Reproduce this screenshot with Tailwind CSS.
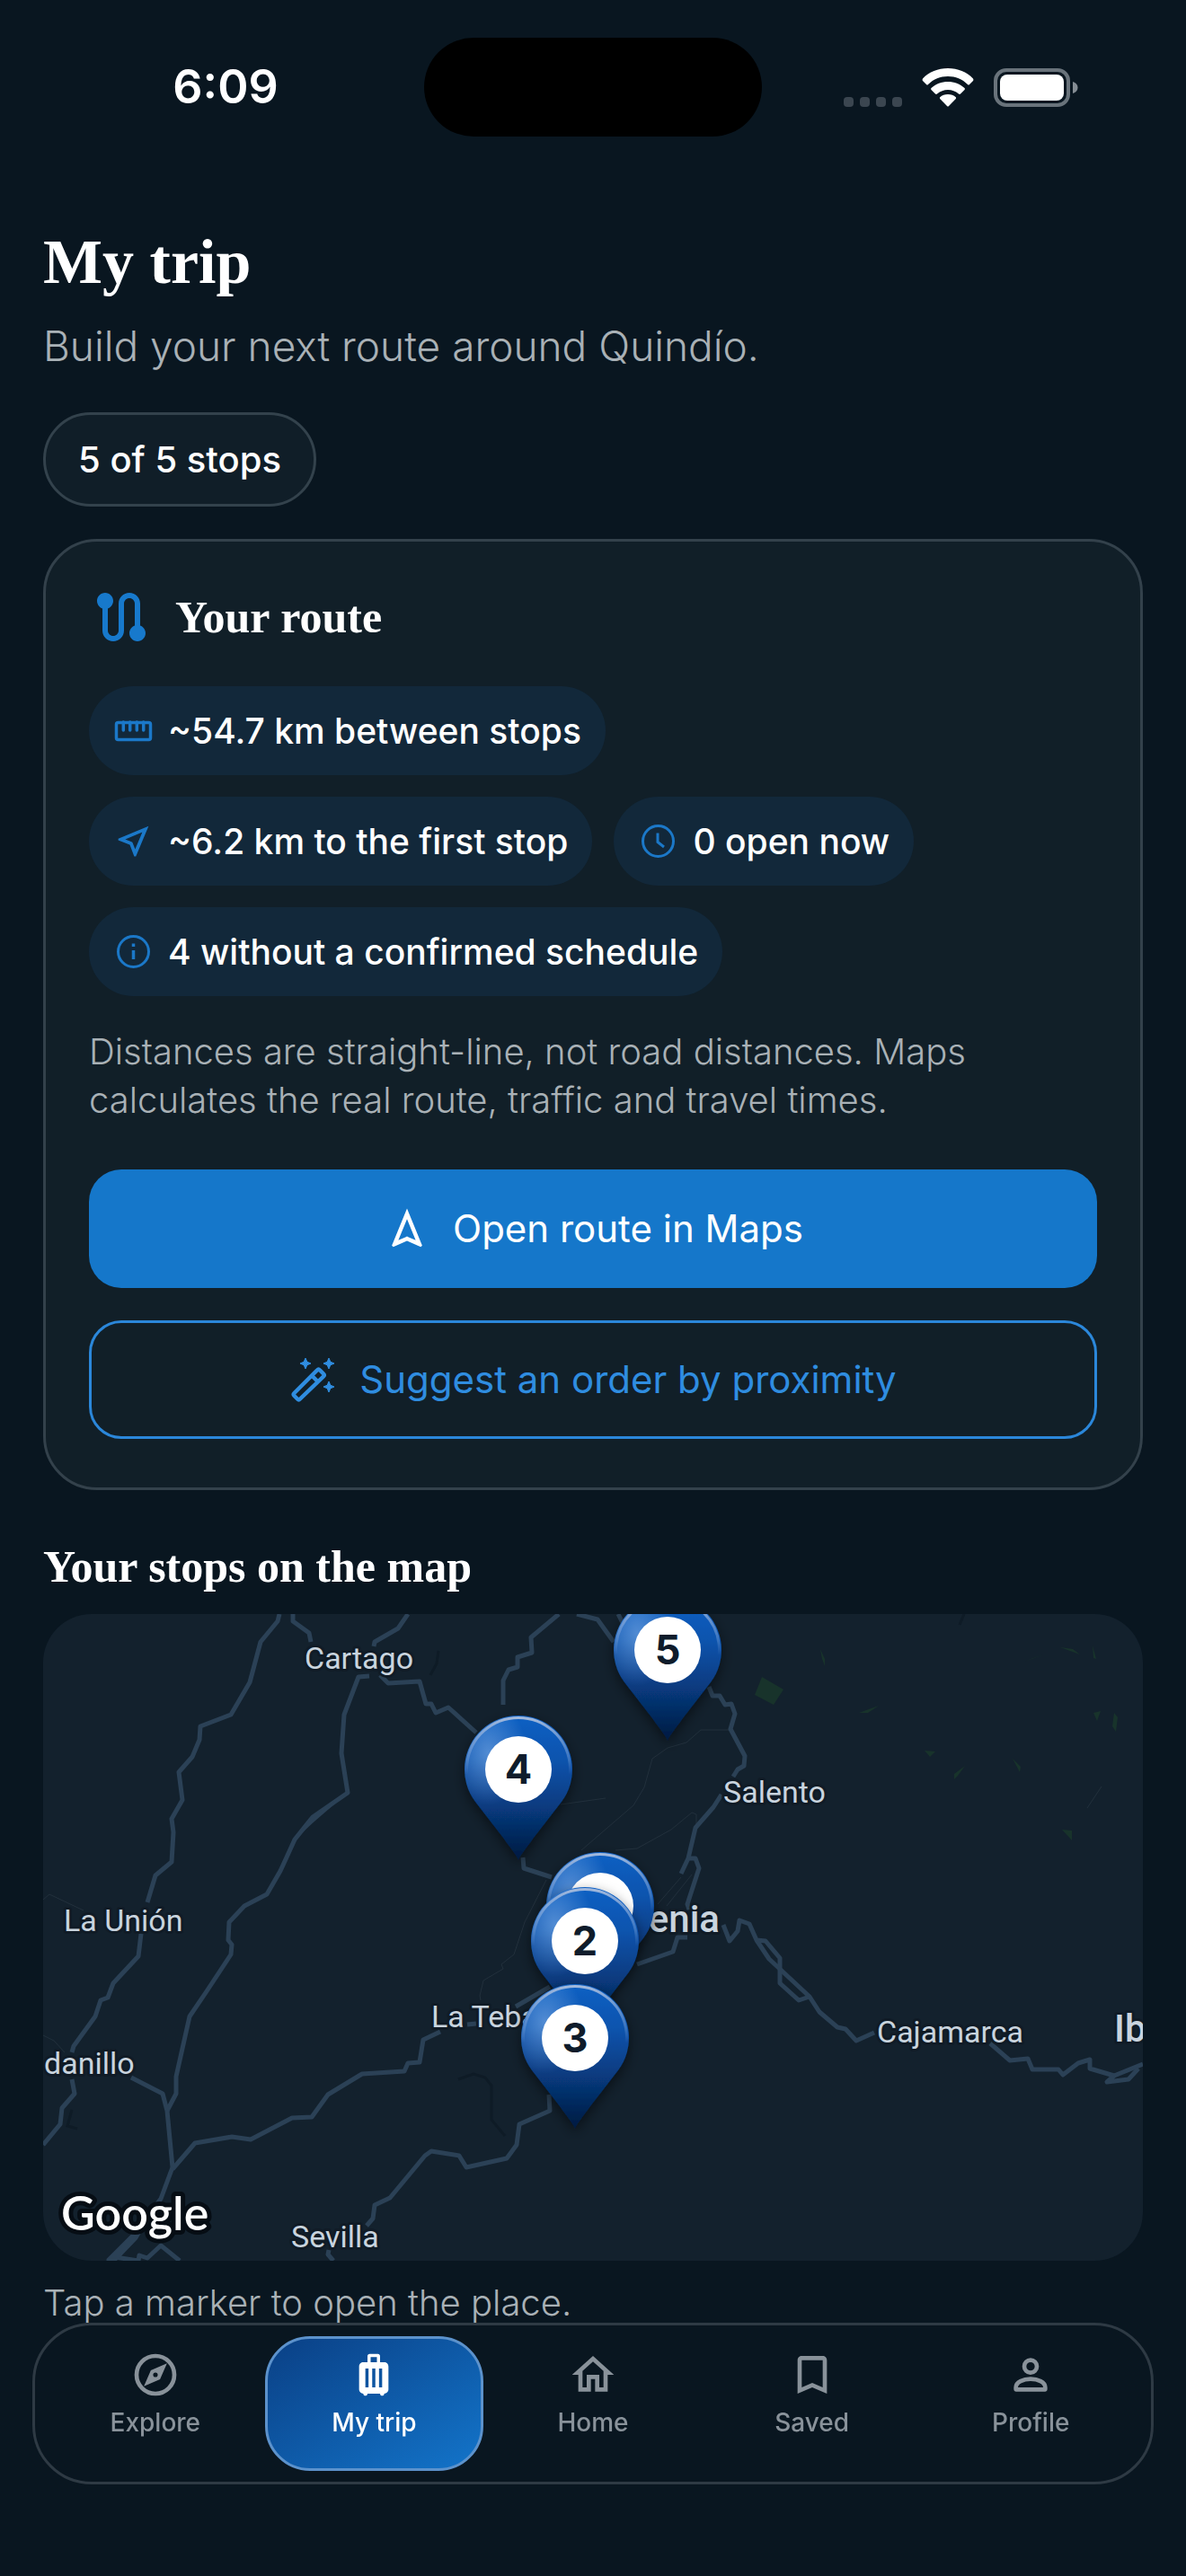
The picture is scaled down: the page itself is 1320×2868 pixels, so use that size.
<!DOCTYPE html>
<html lang="en">
<head>
    <meta charset="utf-8" />
    <meta name="viewport" content="width=device-width, initial-scale=1" />
    <title>My trip</title>
    <script src="https://cdn.jsdelivr.net/npm/@tailwindcss/browser@4"></script>
</head>
<body class="min-h-screen bg-[#091620] font-['Inter',sans-serif] text-white">
    <!-- Status bar -->
    <header class="grid grid-cols-[1fr_376px_1fr] items-center px-[30px] pt-[42px]">
        <time class="text-center text-[52px] leading-[60px] font-semibold">6:09</time>
        <div class="h-[110px] rounded-full bg-black"></div>
        <div class="flex items-end justify-center gap-[22px]">
            <div class="flex gap-[7px]">
                <span class="size-[11px] rounded-sm bg-[#3b4650]"></span>
                <span class="size-[11px] rounded-sm bg-[#3b4650]"></span>
                <span class="size-[11px] rounded-sm bg-[#3b4650]"></span>
                <span class="size-[11px] rounded-sm bg-[#3b4650]"></span>
            </div>
            <svg width="58" height="43" viewBox="0 0 58 43" fill="#fff" aria-hidden="true">
                <path d="M29 0C18 0 8 4 1 11.500Q0 13 1 14L5 18Q6 19 7 18C13 12 20.500 9 29 9S45 12 51 18Q52 19 53 18L57 14Q58 13 57 11.500C50 4 40 0 29 0Z" />
                <path d="M29 15C22 15 15.500 17.500 10.500 22Q9.500 23 10.500 24L15 28.500Q16 29.300 17 28.500C20.500 25.500 24.500 24 29 24S37.500 25.500 41 28.500Q42 29.300 43 28.500L47.500 24Q48.500 23 47.500 22C42.500 17.500 36 15 29 15Z" />
                <path d="M29 29C25.500 29 22.500 30.200 20.200 32.200Q19.500 33 20.200 34L28 42Q29 43 30 42L37.800 34Q38.500 33 37.800 32.200C35.500 30.200 32.500 29 29 29Z" />
            </svg>
            <svg width="94" height="43" viewBox="0 0 94 43" aria-hidden="true">
                <rect x="2" y="2" width="81" height="39" rx="12" fill="none" stroke="#69737b" stroke-width="4" />
                <rect x="7" y="7" width="71" height="29" rx="8" fill="#fff" />
                <path d="M88 15C91.500 16 93.500 18.500 93.500 21.500S91.500 27 88 28Z" fill="#858d94" />
            </svg>
        </div>
    </header>

    <main class="px-12 pt-[98px] pb-[260px]">
        <h1 class="font-['Liberation_Serif',serif] text-[70px] leading-[84px] font-bold">My trip</h1>
        <p class="mt-[21px] text-[46px] leading-[60px] font-light text-[#a9b1b6]">Build your next route around Quindío.</p>
        <div class="mt-[44px] inline-flex h-[105px] items-center rounded-full border-3 border-[#33424c] bg-[#101e28] px-9 text-[40px] leading-[54px] font-medium">
            5 of 5 stops
        </div>

        <!-- Route summary -->
        <section class="mt-9 rounded-[60px] border-3 border-[#33414b] bg-[#111f28] px-12 pt-12 pb-[54px]">
            <div class="flex items-center gap-6">
                <svg class="size-[72px]" viewBox="0 0 24 24" fill="#1779cc" aria-hidden="true">
                    <path d="M19 15.180V7c0-2.210-1.790-4-4-4s-4 1.790-4 4v10c0 1.100-.9 2-2 2s-2-.9-2-2V8.820C8.160 8.400 9 7.300 9 6c0-1.660-1.340-3-3-3S3 4.340 3 6c0 1.300.84 2.400 2 2.820V17c0 2.210 1.790 4 4 4s4-1.790 4-4V7c0-1.100.9-2 2-2s2 .9 2 2v8.180c-1.160.41-2 1.510-2 2.820 0 1.660 1.340 3 3 3s3-1.340 3-3c0-1.310-.84-2.410-2-2.820z" />
                </svg>
                <h2 class="font-['Liberation_Serif',serif] text-[50px] leading-[60px] font-bold">Your route</h2>
            </div>

            <ul class="mt-[41px] flex flex-wrap gap-6 text-[39px] leading-[54px] font-medium">
                <li class="flex h-[99px] items-center gap-4 rounded-full bg-[#12283a] px-[27px]">
                    <svg class="size-[45px]" viewBox="0 0 45 45" fill="none" stroke="#1b78c8" stroke-width="3.500" aria-hidden="true">
                        <rect x="3.500" y="13.500" width="38" height="19" rx="2" />
                        <path d="M11.300 13V22M18.700 13V22M26.300 13V22M33.700 13V22" stroke-linecap="round" />
                    </svg>
                    ~54.7 km between stops
                </li>
                <li class="flex h-[99px] items-center gap-4 rounded-full bg-[#12283a] px-[27px]">
                    <svg class="size-[45px]" viewBox="0 0 24 24" fill="#1b78c8" aria-hidden="true">
                        <path d="M17.270 6.730l-4.240 10.130-1.320-3.420-.32-.83-.82-.32-3.430-1.330 10.130-4.230M21 3L3 10.530v.98l6.840 2.650L12.480 21h.98L21 3z" />
                    </svg>
                    ~6.2 km to the first stop
                </li>
                <li class="flex h-[99px] items-center gap-4 rounded-full bg-[#12283a] px-[27px]">
                    <svg class="size-[45px]" viewBox="0 0 45 45" fill="none" stroke="#1b78c8" stroke-width="3" aria-hidden="true">
                        <circle cx="22.500" cy="22.500" r="17" />
                        <path d="M22 13.500V23.500L29 29" />
                    </svg>
                    0 open now
                </li>
                <li class="flex h-[99px] items-center gap-4 rounded-full bg-[#12283a] px-[27px]">
                    <svg class="size-[45px]" viewBox="0 0 45 45" fill="none" stroke="#1b78c8" stroke-width="3" aria-hidden="true">
                        <circle cx="22.500" cy="22.500" r="17" />
                        <path d="M22.500 21V31M22.500 13.500V17" stroke-width="3.500" />
                    </svg>
                    4 without a confirmed schedule
                </li>
            </ul>

            <p class="mt-[35px] text-[40px] leading-[54px] font-light text-[#a9b1b6]">
                Distances are straight-line, not road distances. Maps calculates the real route, traffic and travel times.
            </p>

            <div class="mt-[50px] flex flex-col gap-9 text-[42px] leading-[54px]">
                <button type="button" class="flex h-[132px] items-center justify-center gap-6 rounded-[36px] bg-[#1577ca]">
                    <svg class="size-[54px]" viewBox="0 0 24 24" fill="#fff" aria-hidden="true">
                        <path d="M12 7.270l4.280 10.430-3.470-1.530-.81-.36-.81.36-3.470 1.530L12 7.270M12 2L4.500 20.290l.71.71L12 18l6.790 3 .71-.71L12 2z" />
                    </svg>
                    Open route in Maps
                </button>
                <button type="button" class="flex h-[132px] items-center justify-center gap-6 rounded-[36px] border-3 border-[#2b87da] text-[#2f8de0]">
                    <svg class="size-[54px]" viewBox="0 0 54 54" aria-hidden="true">
                        <path d="M31 16.500Q32.500 15 34 16.500L38 20.500Q39.500 22 38 23.500L12 48.500Q10.500 50 9 48.500L5.500 45Q4 43.500 5.500 42ZM25 22.500L32 29.500" fill="none" stroke="#2f8de0" stroke-width="4.500" stroke-linejoin="round" />
                        <path d="M18 3L19.800 7.200L24 9L19.800 10.800L18 15L16.200 10.800L12 9L16.200 7.200ZM44 3L45.800 7.200L50 9L45.800 10.800L44 15L42.200 10.800L38 9L42.200 7.200ZM44 29L45.800 33.200L50 35L45.800 36.800L44 41L42.200 36.800L38 35L42.200 33.200Z" fill="#2f8de0" stroke="#2f8de0" stroke-width="1" />
                    </svg>
                    Suggest an order by proximity
                </button>
            </div>
        </section>

        <h2 class="mt-[55px] font-['Liberation_Serif',serif] text-[50px] leading-[60px] font-bold">Your stops on the map</h2>

        <div class="mt-[23px] overflow-hidden rounded-[54px] bg-[#13212d]">
            <svg class="block h-auto w-full" viewBox="0 0 1224 720" role="group" aria-label="Map of your stops">
                <defs>
                    <linearGradient id="pin-fill" x1="0" y1="0" x2="0" y2="1">
                        <stop offset="0" stop-color="#1160c4" />
                        <stop offset=".3" stop-color="#0c54ae" />
                        <stop offset=".65" stop-color="#07397c" />
                        <stop offset="1" stop-color="#021a40" />
                    </linearGradient>
                    <radialGradient id="pin-shine" cx=".22" cy=".26" r=".36">
                        <stop offset="0" stop-color="#7fb0ea" stop-opacity=".6" />
                        <stop offset="1" stop-color="#7fb0ea" stop-opacity="0" />
                    </radialGradient>
                    <linearGradient id="pin-rim" x1="0" y1="0" x2="0" y2="1">
                        <stop offset="0" stop-color="#a9bddd" stop-opacity=".95" />
                        <stop offset=".5" stop-color="#7fa6dc" stop-opacity=".4" />
                        <stop offset=".7" stop-color="#7fa6dc" stop-opacity="0" />
                    </linearGradient>
                    <filter id="pin-shadow" x="-30%" y="-20%" width="160%" height="150%">
                        <feDropShadow dx="0" dy="5" stdDeviation="7" flood-color="#000" flood-opacity=".5" />
                    </filter>
                    <g id="pin">
                        <path d="M0 101C-3 94 -10 86 -17 76L-48 36A60 60 0 1 1 48 36L17 76C10 86 3 94 0 101Z" fill="url(#pin-fill)" filter="url(#pin-shadow)" />
                        <path d="M0 101C-3 94 -10 86 -17 76L-48 36A60 60 0 1 1 48 36L17 76C10 86 3 94 0 101Z" fill="url(#pin-shine)" />
                        <path d="M-47 33A57.500 57.500 0 1 1 47 33" fill="none" stroke="url(#pin-rim)" stroke-width="3" />
                        <circle r="37" fill="#fff" />
                    </g>
                </defs>

                <!-- woodland and water -->
                <g fill="#18332b">
                    <path d="M800 70L824 84L813 101L792 90Z" />
                    <path d="M865 39L870 50L870 58L867 50ZM908 110L930 102L918 110ZM981 152L993 153L987 159ZM1014 178L1026 169L1018 180L1014 184ZM1079 161L1088 170L1087 176ZM1092 53L1114 45L1102 49ZM1132 37L1146 39L1154 45ZM1169 110L1177 108L1173 119ZM1192 110L1196 115L1194 131L1190 125ZM1134 240L1145 241L1145 252ZM1168 35L1172 50L1169 49Z" />
                </g>
                <g fill="none" stroke="#0e1b26" stroke-width="3">
                    <path d="M462 518L479 512L492 516L499 525L499 563L514 581" />
                    <path d="M1025 0L1020 12M440 41L438 55L431 68M32 552L27 570L38 573" />
                </g>

                <!-- minor roads -->
                <g fill="none" stroke="#22303c" stroke-width="1">
                    <path d="M765 129H732L716 143L695 149L678 161L669 193L657 213L599 263" />
                    <path d="M637 263L661 261L699 240L722 221L727 223V238" />
                    <path d="M576 212L626 205M710 293L684 323M722 290L694 325" />
                    <path d="M560 296L536 343L524 379L510 390L512 395L490 408L486 425L487 430" />
                    <path d="M0 318L7 312L45 330M0 469L12 475L24 488M1178 192L1162 216" />
                </g>

                <!-- main roads -->
                <g fill="none" stroke="#2b4156" stroke-width="5" stroke-linejoin="round">
                    <path d="M263 0L261 8L242 31L230 76L209 112L175 125L174 140L166 159L151 176L155 207L143 228L145 243L143 276L125 291L116 321" />
                    <path d="M109 356L106 381L78 411L72 427L64 430L58 448L34 481L32 488M32 518L35 534L21 550L19 568L0 591" />
                    <path d="M363 69L351 70L335 112L332 155L339 199L300 226L280 251L270 273L264 286L249 312L224 325L207 343L206 363L210 368L209 379L182 420L163 448L148 515L148 534L138 553" />
                    <path d="M98 516L133 534L138 553L144 616L131 651L99 693L72 720M80 716L106 720L107 714L116 717L131 703L152 720" />
                    <path d="M144 618L169 589L210 582L231 585L277 561L299 560L317 535L355 512L402 509L406 500L419 499L423 474L442 465M472 457L482 456M526 437L564 415" />
                    <path d="M661 390L701 376L706 360L717 360" />
                    <path d="M318 708L317 713L323 720M360 681L367 673L369 658L386 650L425 603L432 598L463 603L471 616L516 606L527 591L530 568L564 553L563 535" />
                    <path d="M278 0V8L296 21L298 31M406 0L395 16L369 31L368 36" />
                    <path d="M375 68L384 77L419 75L426 100H432L437 110L451 104L482 132" />
                    <path d="M574 0L543 26L544 43L528 48V59L518 62L512 74V101M594 0L617 6L635 31M640 0L646 12" />
                    <path d="M741 81L745 91H753L759 101L766 100L770 111L765 128L781 158L780 169L773 173L768 181M755 201L746 215L726 238L718 272L710 289" />
                    <path d="M718 272H726L730 283L717 323L719 329M534 271L535 283L566 293" />
                    <path d="M757 346L764 364L773 353L775 341L786 345L794 363L804 364L820 383V411L841 430L853 426" />
                    <path d="M794 363L808 384L853 426L864 443L884 460L893 462L905 475L925 466" />
                    <path d="M1054 478L1076 497L1096 495L1101 507H1130L1135 513L1152 500L1165 496V506L1192 514L1224 501" />
                    <path d="M1192 514L1184 521L1208 518L1219 506" />
                </g>
                <path d="M339 199L300 224L280 251L303 230ZM131 651L99 690L70 720H82L105 696Z" fill="#2b4156" />

                <!-- place names -->
                <g class="font-['Roboto',sans-serif] text-[34px]" fill="#c9d4de" stroke="#101b26" stroke-width="6" stroke-linejoin="round" paint-order="stroke">
                    <text x="291" y="61">Cartago</text>
                    <text x="757" y="210">Salento</text>
                    <text x="23" y="353">La Unión</text>
                    <text x="1" y="512">danillo</text>
                    <text x="432" y="460">La Teba</text>
                    <text x="928" y="477">Cajamarca</text>
                    <text x="276" y="705">Sevilla</text>
                    <text x="753" y="354" text-anchor="end" class="text-[42px] font-medium">enia</text>
                    <text x="1192" y="476" class="text-[42px] font-medium">Ib</text>
                </g>
                <text x="20" y="686" class="font-['Lato',sans-serif] text-[52px] font-semibold" fill="#fff" stroke="#060d14" stroke-width="10" stroke-linejoin="round" paint-order="stroke">Google</text>

                <!-- stops -->
                <g class="text-[45px] font-bold" fill="#0f1c2b" text-anchor="middle">
                    <a href="#stop-5" transform="translate(695 40)"><use href="#pin" /><text y="16">5</text></a>
                    <a href="#stop-4" transform="translate(529 173)"><use href="#pin" /><text y="16">4</text></a>
                    <a href="#stop-1" aria-label="Stop 1" transform="translate(620 325)"><use href="#pin" /></a>
                    <a href="#stop-2" transform="translate(603 364)"><use href="#pin" /><text y="16">2</text></a>
                    <a href="#stop-3" transform="translate(592 472)"><use href="#pin" /><text y="16">3</text></a>
                </g>
            </svg>
        </div>
        <p class="mt-5 text-[40px] leading-[54px] font-light text-[#a9b1b6]">Tap a marker to open the place.</p>
    </main>

    <!-- Tab bar -->
    <nav class="fixed inset-x-9 bottom-[102px] grid grid-cols-5 rounded-[66px] border-3 border-[#2e3a44] bg-[#091620] p-3 text-[28px] leading-[34px] font-medium text-[#89929a]">
        <a href="#explore" class="flex h-[150px] flex-col items-center gap-2 rounded-[50px] border-3 border-transparent pt-3">
            <svg class="size-[56px]" viewBox="0 0 24 24" fill="currentColor" aria-hidden="true">
                <circle cx="12" cy="12" r="9" fill="none" stroke="currentColor" stroke-width="2" />
                <path fill-rule="evenodd" d="M14.190 14.190L6.500 17.500L9.810 9.810L17.500 6.500ZM12 10.900a1.100 1.100 0 1 0 0 2.200a1.100 1.100 0 0 0 0-2.200Z" />
            </svg>
            Explore
        </a>
        <a href="#trip" aria-current="page" class="flex h-[150px] flex-col items-center gap-2 rounded-[50px] border-3 border-[#5c92cc] bg-linear-to-br from-[#0a3f84] to-[#1375cb] bg-origin-border pt-3 text-white">
            <svg class="size-[56px]" viewBox="0 0 24 24" fill="currentColor" aria-hidden="true">
                <path d="M17 6h-2V3c0-.55-.45-1-1-1h-4c-.55 0-1 .45-1 1v3H7c-1.100 0-2 .9-2 2v11c0 1.100.9 2 2 2 0 .55.45 1 1 1s1-.45 1-1h6c0 .55.45 1 1 1s1-.45 1-1c1.100 0 2-.9 2-2V8c0-1.100-.9-2-2-2zM9.500 18H8V9h1.500v9zm3.250 0h-1.500V9h1.500v9zM13.500 6h-3V3.500h3V6zM16 18h-1.500V9H16v9z" />
            </svg>
            My trip
        </a>
        <a href="#home" class="flex h-[150px] flex-col items-center gap-2 rounded-[50px] border-3 border-transparent pt-3">
            <svg class="size-[56px]" viewBox="0 0 24 24" fill="currentColor" aria-hidden="true">
                <path d="M12 5.690l5 4.500V18h-2v-6H9v6H7v-7.810l5-4.500M12 3L2 12h3v8h6v-6h2v6h6v-8h3L12 3z" />
            </svg>
            Home
        </a>
        <a href="#saved" class="flex h-[150px] flex-col items-center gap-2 rounded-[50px] border-3 border-transparent pt-3">
            <svg class="size-[56px]" viewBox="0 0 24 24" fill="currentColor" aria-hidden="true">
                <path d="M17 3H7c-1.100 0-1.990.9-1.990 2L5 21l7-3 7 3V5c0-1.100-.9-2-2-2zm0 15l-5-2.180L7 18V5h10v13z" />
            </svg>
            Saved
        </a>
        <a href="#profile" class="flex h-[150px] flex-col items-center gap-2 rounded-[50px] border-3 border-transparent pt-3">
            <svg class="size-[56px]" viewBox="0 0 24 24" fill="none" stroke="currentColor" stroke-width="2" aria-hidden="true">
                <circle cx="12" cy="8" r="3" />
                <path d="M5 18C5 15.500 8.500 14 12 14S19 15.500 19 18V19H5Z" stroke-linejoin="round" />
            </svg>
            Profile
        </a>
    </nav>
</body>
</html>
